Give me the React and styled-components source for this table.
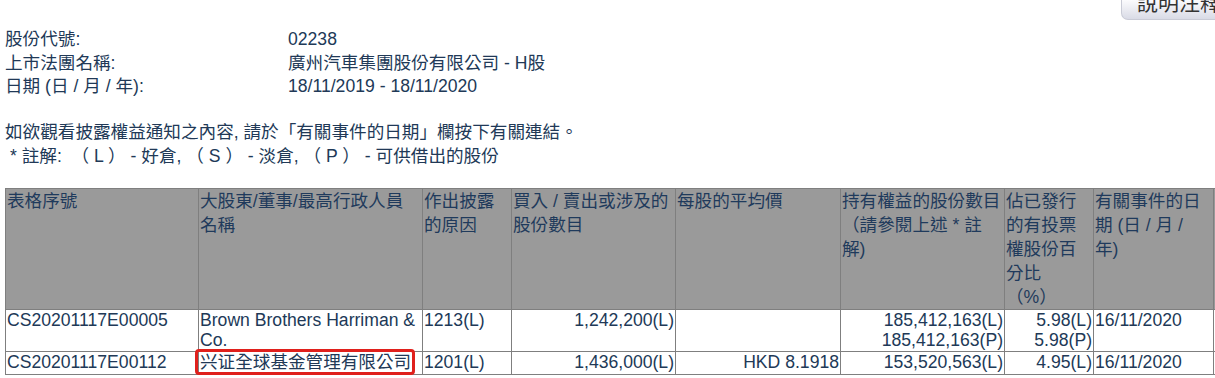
import React from 'react';
import styled, { createGlobalStyle } from 'styled-components';

const GlobalStyle = createGlobalStyle`
  html, body {
    margin: 0;
    padding: 0;
    overflow: hidden;
    background: #fff;
  }
  body {
    font-family: "Liberation Sans", Arial, "Noto Sans CJK TC", sans-serif;
    font-size: 17.6px;
    color: #213957;
  }
`;

const Page = styled.div`
  width: 1215px;
  height: 378px;
  overflow: hidden;
  padding-left: 5px;
  box-sizing: border-box;
`;

const TopBar = styled.div`
  height: 20px;
  display: flex;
  justify-content: flex-end;
`;

const NoteButton = styled.button`
  box-sizing: border-box;
  height: 20px;
  margin-right: -22px;
  padding: 0 15px 14px;
  border: 1px solid #c9cbd6;
  border-top: none;
  border-radius: 0 0 0 7px;
  background: linear-gradient(#fbfbfd, #d9dbe6);
  font-family: "Liberation Sans", Arial, "Noto Sans CJK TC", sans-serif;
  font-size: 21px;
  line-height: 6px;
  color: #333;
  white-space: nowrap;
  overflow: visible;
`;

const InfoGrid = styled.div`
  margin-top: 8px;
  display: grid;
  grid-template-columns: 283px auto;
  line-height: 23.5px;
`;

const Para = styled.p`
  margin: 0;
  line-height: 24px;
  white-space: pre;
  padding-left: ${(p) => p.$indent || 0}px;
`;

const Notes = styled.div`
  margin-top: 21.5px;
  margin-bottom: 20px;
`;

const Table = styled.table`
  border-collapse: collapse;
  table-layout: fixed;
  width: 1308px;
`;

const HeadCell = styled.th`
  background: #9a9a9a;
  border: 1px solid #7f7f7f;
  padding: 0 1px;
  font-weight: normal;
  text-align: left;
  vertical-align: top;
  line-height: 24px;
  height: 120px;
  color: #1f3a5c;
  white-space: nowrap;
`;

const Cell = styled.td`
  border: 1px solid #7f7f7f;
  padding: 0 1px;
  vertical-align: top;
  line-height: 20px;
  text-align: ${(p) => (p.$right ? 'right' : 'left')};
  height: ${(p) => p.$h || 20}px;
  white-space: nowrap;
`;

const Highlight = styled.span`
  position: relative;
  &::after {
    content: '';
    position: absolute;
    left: -5px;
    right: -4px;
    top: -3px;
    bottom: -3px;
    border: 3px solid #e0201c;
    border-radius: 4px;
  }
`;

const widths = [193, 224, 89, 164, 165, 164, 89, 120, 100];

const headers = [
  ['表格序號'],
  ['大股東/董事/最高行政人員', '名稱'],
  ['作出披露', '的原因'],
  ['買入 / 賣出或涉及的', '股份數目'],
  ['每股的平均價'],
  ['持有權益的股份數目', '（請參閱上述 * 註', '解)'],
  ['佔已發行', '的有投票', '權股份百', '分比', '（%）'],
  ['有關事件的日', '期 (日 / 月 /', '年)'],
  [''],
];

const rows = [
  {
    h: 41,
    id: 'CS20201117E00005',
    name: ['Brown Brothers Harriman &', 'Co.'],
    reason: '1213(L)',
    qty: '1,242,200(L)',
    price: '',
    held: ['185,412,163(L)', '185,412,163(P)'],
    pct: ['5.98(L)', '5.98(P)'],
    date: '16/11/2020',
  },
  {
    h: 22,
    id: 'CS20201117E00112',
    name: ['兴证全球基金管理有限公司'],
    highlight: true,
    reason: '1201(L)',
    qty: '1,436,000(L)',
    price: 'HKD 8.1918',
    held: ['153,520,563(L)'],
    pct: ['4.95(L)'],
    date: '16/11/2020',
  },
];

const Lines = ({ items }) =>
  items.map((t, i) => (
    <React.Fragment key={i}>
      {i > 0 && <br />}
      {t}
    </React.Fragment>
  ));

export default function App() {
  return (
    <Page>
      <GlobalStyle />
      <TopBar>
        <NoteButton>說明注釋</NoteButton>
      </TopBar>
      <InfoGrid>
        <div>股份代號:</div>
        <div>02238</div>
        <div>上市法團名稱:</div>
        <div>廣州汽車集團股份有限公司 - H股</div>
        <div>日期 (日 / 月 / 年):</div>
        <div>18/11/2019 - 18/11/2020</div>
      </InfoGrid>
      <Notes>
        <Para>如欲觀看披露權益通知之內容, 請於「有關事件的日期」欄按下有關連結。</Para>
        <Para $indent={5}>* 註解:  （ L ） - 好倉, （ S ） - 淡倉, （ P ） - 可供借出的股份</Para>
      </Notes>
      <Table>
        <colgroup>
          {widths.map((w, i) => (
            <col key={i} style={{ width: w }} />
          ))}
        </colgroup>
        <thead>
          <tr>
            {headers.map((h, i) => (
              <HeadCell key={i}>
                <Lines items={h} />
              </HeadCell>
            ))}
          </tr>
        </thead>
        <tbody>
          {rows.map((r) => (
            <tr key={r.id}>
              <Cell $h={r.h}>{r.id}</Cell>
              <Cell $h={r.h}>
                {r.highlight ? <Highlight>{r.name[0]}</Highlight> : <Lines items={r.name} />}
              </Cell>
              <Cell $h={r.h}>{r.reason}</Cell>
              <Cell $h={r.h} $right>{r.qty}</Cell>
              <Cell $h={r.h} $right>{r.price}</Cell>
              <Cell $h={r.h} $right><Lines items={r.held} /></Cell>
              <Cell $h={r.h} $right><Lines items={r.pct} /></Cell>
              <Cell $h={r.h}>{r.date}</Cell>
              <Cell $h={r.h} />
            </tr>
          ))}
        </tbody>
      </Table>
    </Page>
  );
}
